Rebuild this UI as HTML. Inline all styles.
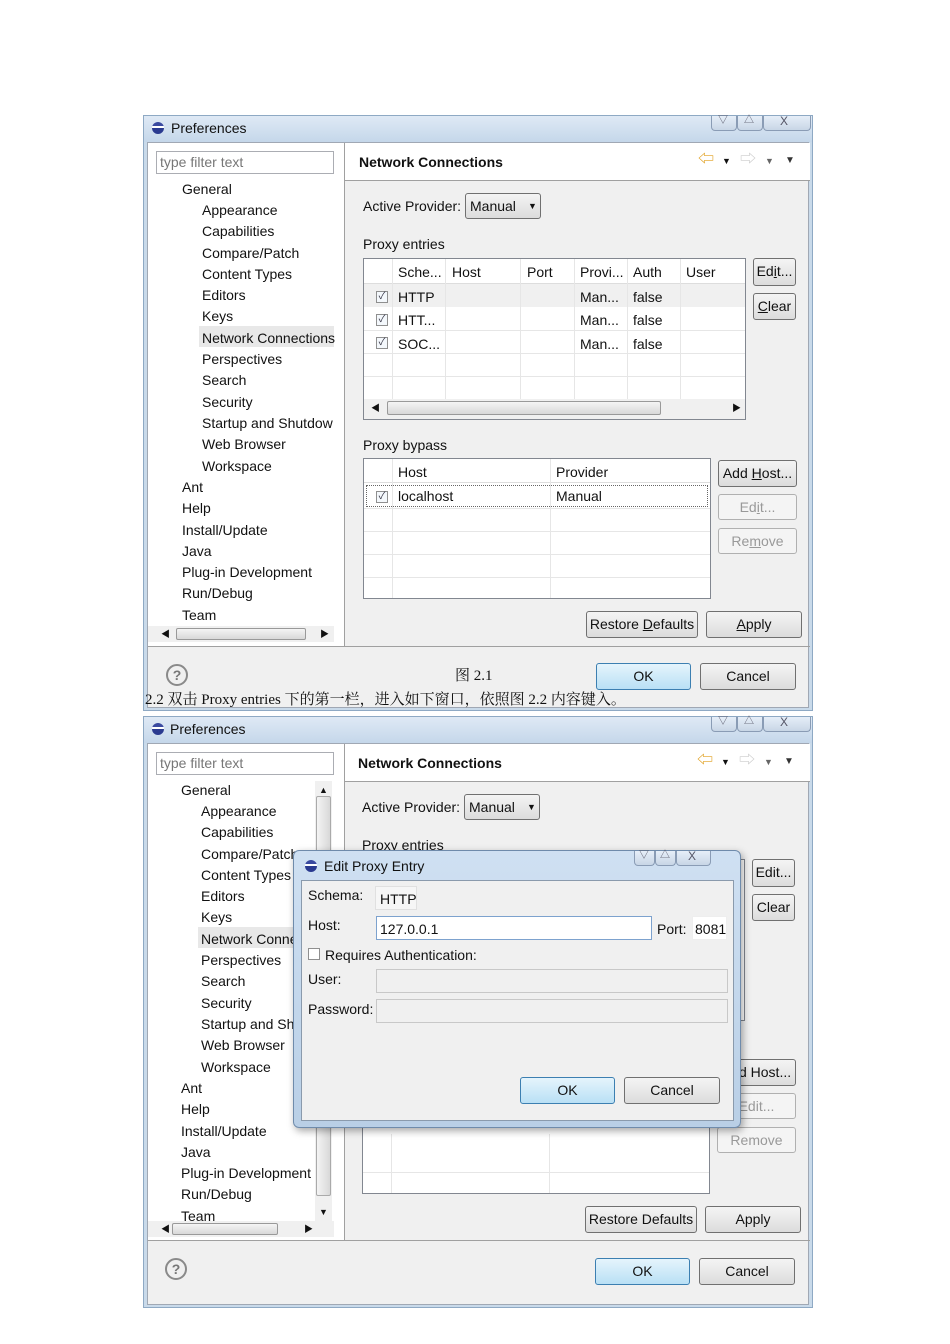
<!DOCTYPE html>
<html><head><meta charset="utf-8"><style>
*{margin:0;padding:0;box-sizing:border-box}
body{width:950px;height:1344px;background:#fff;position:relative;overflow:hidden;font-family:"Liberation Sans","Noto Sans CJK SC",sans-serif;font-size:14px;color:#111}
.a{position:absolute}
.w{position:absolute;left:143px;width:670px;background:#c9daea;border:1px solid #8ea9c4}
.t{white-space:nowrap;position:absolute;line-height:16px}
.tb{position:absolute;left:0;top:0;width:668px;height:26px;background:linear-gradient(#dfe9f5,#c5d7ea)}
.ico{position:absolute;width:12px;height:12px;border-radius:50%;background:linear-gradient(#3a4aa0 0 35%,#fff 35% 50%,#2a3a90 50%)}
.wb{position:absolute;top:0;height:15px;border:1px solid #8a9cb5;border-top:none;background:linear-gradient(#e6eef8,#c8d6e6);border-radius:0 0 4px 4px}
.body{position:absolute;left:3px;top:26px;width:662px;background:#f0f0f0;border:1px solid #a0a8b4}
.wh{background:#fff}
.btn{position:absolute;border:1px solid #707070;border-radius:3px;background:linear-gradient(#f4f4f4,#dcdcdc);text-align:center;line-height:24px;font-size:14px}
.dis{color:#999;border-color:#b0b0b0;background:#f4f4f4}
.okb{border-color:#3c7fb1;background:linear-gradient(#e5f4fc,#b9e0f5)}
.fld{position:absolute;background:#fff;border:1px solid #abadb3}
.cb{position:absolute;width:12px;height:12px;border:1px solid #8f8f8f;background:#f4f8fc;font-size:10px;line-height:10px;text-align:center;color:#334}
.vl{position:absolute;width:1px;background:#e6e6e6}
.hl{position:absolute;height:1px;background:#e6e6e6}
.u{text-decoration:underline}
</style></head><body>

<!-- WINDOW 1 -->
<div class="w" style="top:115px;height:596px">
 <div class="tb"></div>
 <div class="ico" style="left:8px;top:6px"></div>
 <div class="t" style="left:27px;top:4px">Preferences</div>
 <div class="wb" style="left:567px;width:26px"></div><div class="wb" style="left:593px;width:26px"></div><div class="wb" style="left:619px;width:48px"></div>
 <div class="t" style="left:574px;top:-3px;font-size:10px;color:#556">▽</div><div class="t" style="left:600px;top:-3px;font-size:10px;color:#556">△</div><div class="t" style="left:636px;top:-3px;font-size:12px;color:#556">X</div>
 <div class="body" style="height:566px">
  <div class="a wh" style="left:0;top:0;width:196px;height:503px"></div>
  <div class="fld" style="left:8px;top:8px;width:178px;height:23px"></div>
  <div class="t" style="left:12px;top:11px;color:#777">type filter text</div>
  <div class="a" style="left:51px;top:183px;width:135px;height:21px;background:#e8e8e8"></div>
  <div class="t" style="left:34px;top:36px;line-height:21.3px">General</div>
  <div class="t" style="left:54px;top:57px;line-height:21.3px">Appearance<br>Capabilities<br>Compare/Patch<br>Content Types<br>Editors<br>Keys<br>Network Connections<br>Perspectives<br>Search<br>Security<br>Startup and Shutdow<br>Web Browser<br>Workspace</div>
  <div class="t" style="left:34px;top:334px;line-height:21.3px">Ant<br>Help<br>Install/Update<br>Java<br>Plug-in Development<br>Run/Debug<br>Team</div>
  <div class="a" style="left:0;top:483px;width:186px;height:16px;background:#f0f0f0"></div>
  <div class="a" style="left:28px;top:485px;width:130px;height:12px;border:1px solid #999;border-radius:2px;background:linear-gradient(#f4f4f4,#d8d8d8)"></div>
  <div class="t" style="left:13px;top:483px;font-size:9px">◀</div><div class="t" style="left:172px;top:483px;font-size:9px">▶</div>
  <div class="a" style="left:196px;top:0;width:1px;height:503px;background:#a0a0a0"></div>
  <div class="a wh" style="left:197px;top:0;width:465px;height:38px;border-bottom:1px solid #a0a0a0"></div>
  <div class="t" style="left:211px;top:11px;font-weight:bold">Network Connections</div>
  <div class="t" style="left:550px;top:9px;color:#e0a020;font-size:16px">⇦</div><div class="t" style="left:574px;top:10px;font-size:9px">▼</div>
  <div class="t" style="left:592px;top:9px;color:#ccc;font-size:16px">⇨</div><div class="t" style="left:617px;top:10px;font-size:9px;color:#666">▼</div><div class="t" style="left:637px;top:10px;font-size:10px;color:#333">▼</div>
  <div class="t" style="left:215px;top:55px">Active Provider:</div>
  <div class="btn" style="left:317px;top:50px;width:76px;height:26px;text-align:left;padding-left:4px">Manual <span style="font-size:9px;position:absolute;left:62px">▼</span></div>
  <div class="t" style="left:215px;top:93px">Proxy entries</div>
  <div class="a wh" style="left:215px;top:115px;width:383px;height:162px;border:1px solid #828790"></div>
  <div class="hl" style="left:216px;top:140px;width:381px;background:#ddd"></div>
  <div class="a" style="left:216px;top:141px;width:381px;height:23px;background:#f0f0f0"></div>
  <div class="hl" style="left:216px;top:187px;width:381px"></div><div class="hl" style="left:216px;top:210px;width:381px"></div><div class="hl" style="left:216px;top:233px;width:381px"></div>
  <div class="vl" style="left:244px;top:116px;height:140px"></div><div class="vl" style="left:297px;top:116px;height:140px"></div><div class="vl" style="left:372px;top:116px;height:140px"></div><div class="vl" style="left:426px;top:116px;height:140px"></div><div class="vl" style="left:479px;top:116px;height:140px"></div><div class="vl" style="left:532px;top:116px;height:140px"></div>
  <div class="t" style="left:250px;top:121px">Sche...</div><div class="t" style="left:304px;top:121px">Host</div><div class="t" style="left:379px;top:121px">Port</div><div class="t" style="left:432px;top:121px">Provi...</div><div class="t" style="left:485px;top:121px">Auth</div><div class="t" style="left:538px;top:121px">User</div>
  <div class="cb" style="left:228px;top:148px">✓</div><div class="cb" style="left:228px;top:171px">✓</div><div class="cb" style="left:228px;top:194px">✓</div>
  <div class="t" style="left:250px;top:143px;line-height:23.3px">HTTP<br>HTT...<br>SOC...</div>
  <div class="t" style="left:432px;top:143px;line-height:23.3px">Man...<br>Man...<br>Man...</div>
  <div class="t" style="left:485px;top:143px;line-height:23.3px">false<br>false<br>false</div>
  <div class="a" style="left:216px;top:256px;width:381px;height:20px;background:#f0f0f0"></div>
  <div class="a" style="left:239px;top:258px;width:274px;height:14px;border:1px solid #999;border-radius:2px;background:linear-gradient(#f4f4f4,#d8d8d8)"></div>
  <div class="t" style="left:223px;top:257px;font-size:9px">◀</div><div class="t" style="left:584px;top:257px;font-size:9px">▶</div>
  <div class="btn" style="left:605px;top:115px;width:43px;height:28px">Ed<span class="u">i</span>t...</div>
  <div class="btn" style="left:605px;top:150px;width:43px;height:27px"><span class="u">C</span>lear</div>
  <div class="t" style="left:215px;top:294px">Proxy bypass</div>
  <div class="a wh" style="left:215px;top:315px;width:348px;height:141px;border:1px solid #828790"></div>
  <div class="a" style="left:216px;top:316px;width:346px;height:24px;background:#fff;border-bottom:1px solid #ddd"></div>
  <div class="a" style="left:218px;top:342px;width:342px;height:22px;border:1px dotted #666"></div>
  <div class="hl" style="left:216px;top:365px;width:346px"></div><div class="hl" style="left:216px;top:388px;width:346px"></div><div class="hl" style="left:216px;top:411px;width:346px"></div><div class="hl" style="left:216px;top:434px;width:346px"></div>
  <div class="vl" style="left:244px;top:316px;height:139px"></div><div class="vl" style="left:402px;top:316px;height:139px"></div>
  <div class="t" style="left:250px;top:321px">Host</div><div class="t" style="left:408px;top:321px">Provider</div>
  <div class="cb" style="left:228px;top:348px">✓</div>
  <div class="t" style="left:250px;top:345px">localhost</div><div class="t" style="left:408px;top:345px">Manual</div>
  <div class="btn" style="left:570px;top:317px;width:79px;height:27px">Add <span class="u">H</span>ost...</div>
  <div class="btn dis" style="left:570px;top:351px;width:79px;height:26px">Ed<span class="u">i</span>t...</div>
  <div class="btn dis" style="left:570px;top:385px;width:79px;height:26px">Re<span class="u">m</span>ove</div>
  <div class="btn" style="left:438px;top:468px;width:112px;height:27px">Restore <span class="u">D</span>efaults</div>
  <div class="btn" style="left:558px;top:468px;width:96px;height:27px"><span class="u">A</span>pply</div>
  <div class="a" style="left:0;top:503px;width:662px;height:1px;background:#a0a0a0"></div>
  <div class="a" style="left:18px;top:521px;width:22px;height:22px;border:2px solid #8a8a8a;border-radius:50%;text-align:center;line-height:18px;font-weight:bold;color:#777">?</div>
  <div class="btn okb" style="left:448px;top:520px;width:95px;height:27px">OK</div>
  <div class="btn" style="left:552px;top:520px;width:96px;height:27px">Cancel</div>
 </div>
</div>
<div class="t" style="left:455px;top:668px;font-family:'Liberation Serif','Noto Serif CJK SC',serif;font-size:15px">图 2.1</div>
<div class="t" style="left:145px;top:692px;font-family:'Liberation Serif','Noto Serif CJK SC',serif;font-size:15px">2.2 双击 Proxy entries 下的第一栏，进入如下窗口，依照图 2.2 内容键入。</div>

<!-- WINDOW 2 -->
<div class="w" style="top:716px;height:592px">
 <div class="tb"></div>
 <div class="ico" style="left:8px;top:6px"></div>
 <div class="t" style="left:26px;top:4px">Preferences</div>
 <div class="wb" style="left:567px;width:26px"></div><div class="wb" style="left:593px;width:26px"></div><div class="wb" style="left:619px;width:48px"></div>
 <div class="t" style="left:574px;top:-3px;font-size:10px;color:#556">▽</div><div class="t" style="left:600px;top:-3px;font-size:10px;color:#556">△</div><div class="t" style="left:636px;top:-3px;font-size:12px;color:#556">X</div>
 <div class="body" style="height:562px">
  <div class="a wh" style="left:0;top:0;width:196px;height:496px"></div>
  <div class="fld" style="left:8px;top:8px;width:178px;height:23px"></div>
  <div class="t" style="left:12px;top:11px;color:#777">type filter text</div>
  <div class="a" style="left:50px;top:183px;width:135px;height:21px;background:#e8e8e8"></div>
  <div class="t" style="left:33px;top:36px;line-height:21.3px">General</div>
  <div class="t" style="left:53px;top:57px;line-height:21.3px">Appearance<br>Capabilities<br>Compare/Patch<br>Content Types<br>Editors<br>Keys<br>Network Connections<br>Perspectives<br>Search<br>Security<br>Startup and Shutdow<br>Web Browser<br>Workspace</div>
  <div class="t" style="left:33px;top:334px;line-height:21.3px">Ant<br>Help<br>Install/Update<br>Java<br>Plug-in Development<br>Run/Debug<br>Team</div>
  <div class="a" style="left:167px;top:37px;width:17px;height:440px;background:#f0f0f0"></div>
  <div class="a" style="left:168px;top:52px;width:15px;height:400px;border:1px solid #aaa;border-radius:2px;background:linear-gradient(90deg,#f4f4f4,#d8d8d8)"></div>
  <div class="t" style="left:171px;top:38px;font-size:9px">▲</div><div class="t" style="left:171px;top:460px;font-size:9px">▼</div>
  <div class="a" style="left:0;top:477px;width:186px;height:16px;background:#f0f0f0"></div>
  <div class="a" style="left:24px;top:479px;width:106px;height:12px;border:1px solid #999;border-radius:2px;background:linear-gradient(#f4f4f4,#d8d8d8)"></div>
  <div class="t" style="left:13px;top:477px;font-size:9px">◀</div><div class="t" style="left:156px;top:477px;font-size:9px">▶</div>
  <div class="a" style="left:196px;top:0;width:1px;height:496px;background:#a0a0a0"></div>
  <div class="a wh" style="left:197px;top:0;width:465px;height:38px;border-bottom:1px solid #a0a0a0"></div>
  <div class="t" style="left:210px;top:11px;font-weight:bold">Network Connections</div>
  <div class="t" style="left:549px;top:9px;color:#e0a020;font-size:16px">⇦</div><div class="t" style="left:573px;top:10px;font-size:9px">▼</div>
  <div class="t" style="left:591px;top:9px;color:#ccc;font-size:16px">⇨</div><div class="t" style="left:616px;top:10px;font-size:9px;color:#666">▼</div><div class="t" style="left:636px;top:10px;font-size:10px;color:#333">▼</div>
  <div class="t" style="left:214px;top:55px">Active Provider:</div>
  <div class="btn" style="left:316px;top:50px;width:76px;height:26px;text-align:left;padding-left:4px">Manual <span style="font-size:9px;position:absolute;left:62px">▼</span></div>
  <div class="t" style="left:214px;top:93px">Proxy entries</div>
  <div class="a wh" style="left:214px;top:115px;width:383px;height:162px;border:1px solid #828790"></div>
  <div class="btn" style="left:604px;top:115px;width:43px;height:28px">Edit...</div>
  <div class="btn" style="left:604px;top:150px;width:43px;height:27px">Clear</div>
  <div class="a wh" style="left:214px;top:315px;width:348px;height:135px;border:1px solid #828790"></div>
  <div class="hl" style="left:215px;top:428px;width:346px"></div>
  <div class="vl" style="left:243px;top:390px;height:59px"></div><div class="vl" style="left:401px;top:390px;height:59px"></div>
  <div class="btn" style="left:569px;top:315px;width:79px;height:27px">Add Host...</div>
  <div class="btn dis" style="left:569px;top:349px;width:79px;height:26px">Edit...</div>
  <div class="btn dis" style="left:569px;top:383px;width:79px;height:26px">Remove</div>
  <div class="btn" style="left:437px;top:462px;width:112px;height:27px">Restore Defaults</div>
  <div class="btn" style="left:557px;top:462px;width:96px;height:27px">Apply</div>
  <div class="a" style="left:0;top:496px;width:662px;height:1px;background:#a0a0a0"></div>
  <div class="a" style="left:17px;top:514px;width:22px;height:22px;border:2px solid #8a8a8a;border-radius:50%;text-align:center;line-height:18px;font-weight:bold;color:#777">?</div>
  <div class="btn okb" style="left:447px;top:514px;width:95px;height:27px">OK</div>
  <div class="btn" style="left:551px;top:514px;width:96px;height:27px">Cancel</div>
 </div>
</div>

<!-- DIALOG -->
<div class="a" style="left:293px;top:850px;width:448px;height:278px;border:1px solid #6f8bab;border-radius:6px;background:linear-gradient(#cfe0f2,#b9cfe6);box-shadow:2px 3px 8px rgba(0,0,0,.35)">
 <div class="ico" style="left:11px;top:9px"></div>
 <div class="t" style="left:30px;top:7px">Edit Proxy Entry</div>
 <div class="wb" style="left:340px;width:21px"></div><div class="wb" style="left:361px;width:21px"></div><div class="wb" style="left:382px;width:35px"></div>
 <div class="t" style="left:345px;top:-3px;font-size:10px;color:#556">▽</div><div class="t" style="left:366px;top:-3px;font-size:10px;color:#556">△</div><div class="t" style="left:394px;top:-3px;font-size:12px;color:#556">X</div>
 <div class="a" style="left:7px;top:29px;width:433px;height:241px;background:#f0f0f0;border:1px solid #8a9aac">
  <div class="t" style="left:6px;top:6px">Schema:</div>
  <div class="a" style="left:73px;top:5px;width:42px;height:24px;background:#f6f6f6;border:1px solid #e0e0e0"></div>
  <div class="t" style="left:78px;top:10px">HTTP</div>
  <div class="t" style="left:6px;top:36px">Host:</div>
  <div class="fld" style="left:74px;top:35px;width:276px;height:24px;border-color:#7da2ce"></div>
  <div class="t" style="left:78px;top:40px">127.0.0.1</div>
  <div class="t" style="left:355px;top:40px">Port:</div>
  <div class="fld" style="left:390px;top:35px;width:35px;height:24px;border-color:#eee"></div>
  <div class="t" style="left:393px;top:40px">8081</div>
  <div class="cb" style="left:6px;top:67px;background:#fff"></div>
  <div class="t" style="left:23px;top:66px">Requires Authentication:</div>
  <div class="t" style="left:6px;top:90px">User:</div>
  <div class="a" style="left:74px;top:88px;width:352px;height:24px;background:#f0f0f0;border:1px solid #c8c8c8"></div>
  <div class="t" style="left:6px;top:120px">Password:</div>
  <div class="a" style="left:74px;top:118px;width:352px;height:24px;background:#f0f0f0;border:1px solid #c8c8c8"></div>
  <div class="btn okb" style="left:218px;top:196px;width:95px;height:27px">OK</div>
  <div class="btn" style="left:322px;top:196px;width:96px;height:27px">Cancel</div>
 </div>
</div>
</body></html>
